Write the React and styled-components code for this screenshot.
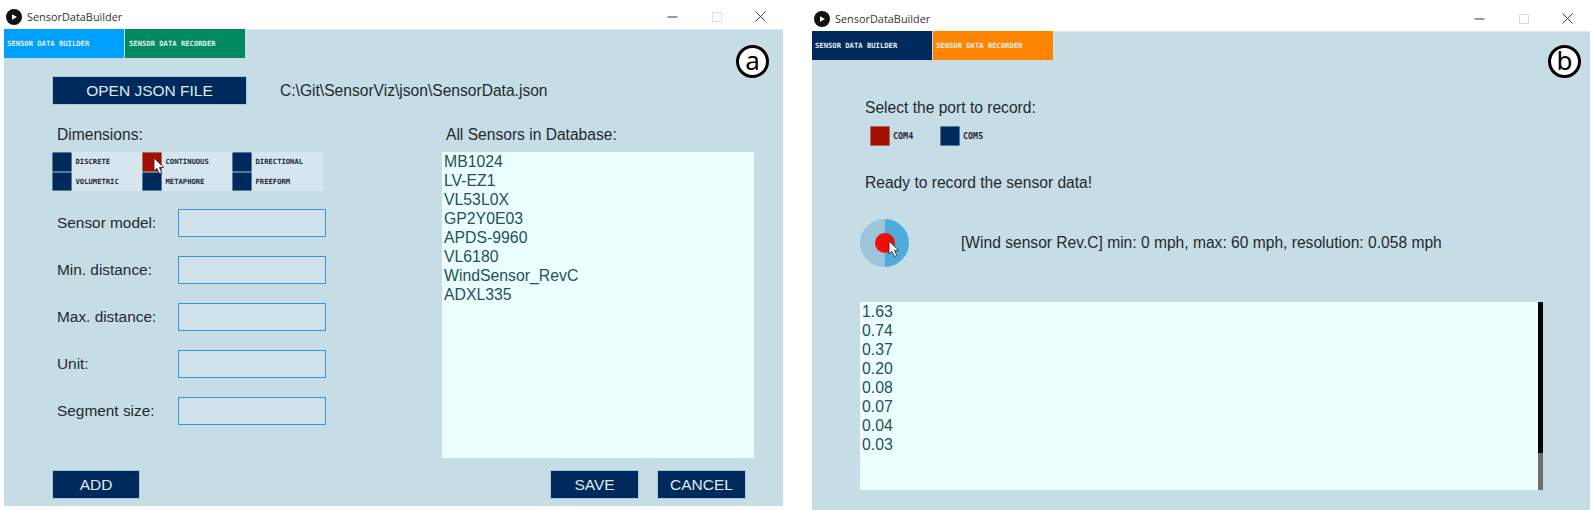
import styled, { createGlobalStyle } from 'styled-components';

const NAVY = '#012a5c';
const RED = '#a50f00';

const GlobalStyle = createGlobalStyle`
  html, body {
    margin: 0;
    padding: 0;
    background: #ffffff;
  }
  * {
    box-sizing: border-box;
  }
`;

const Page = styled.div`
  width: 1595px;
  height: 510px;
  overflow: hidden;
  display: flex;
  padding-left: 4px;
  gap: 29px;
  font-family: 'Liberation Sans', Arial, sans-serif;
  color: #222a2e;
`;

const Window = styled.div`
  width: ${({ $width }) => $width}px;
  display: flex;
  flex-direction: column;
`;

const TitleBar = styled.div`
  height: ${({ $height }) => $height}px;
  flex-shrink: 0;
  display: flex;
  align-items: center;
  background: #ffffff;
  padding-top: ${({ $dropTop }) => $dropTop}px;
`;

const AppIcon = styled.svg`
  width: 16px;
  height: 16px;
  margin-left: 2px;
`;

const AppTitle = styled.span`
  margin-left: 5px;
  font-family: 'Open Sans', 'Noto Sans', sans-serif;
  font-size: 10.9px;
  color: #333333;
`;

const Controls = styled.div`
  margin-left: auto;
  display: flex;
  align-items: center;
  width: 99px;
  justify-content: space-between;
  margin-right: 17px;
  height: 12px;
`;

const Body = styled.div`
  position: relative;
  height: ${({ $height }) => $height}px;
  background: #c7dde6;
  border-top: 1px solid #dbe8ee;
`;

const Tabs = styled.div`
  display: flex;
  gap: 1px;
  margin-top: -1px;
`;

const Tab = styled.div`
  width: 120px;
  height: 29px;
  display: flex;
  align-items: center;
  padding-left: ${({ $pad }) => $pad}px;
  background: ${({ $color }) => $color};
  color: #e0efee;
  font-family: 'DejaVu Sans Mono', monospace;
  font-size: 7.2px;
  font-weight: 700;
  white-space: nowrap;
`;

const Badge = styled.div`
  position: absolute;
  top: ${({ $top }) => $top}px;
  right: ${({ $right }) => $right}px;
  width: 33px;
  height: 33px;
  border-radius: 50%;
  border: 3px solid #000000;
  background: #ffffff;
  display: flex;
  align-items: center;
  justify-content: center;
  padding-bottom: 3px;
  color: #000000;
  font-family: 'Noto Sans', sans-serif;
  font-size: 26px;
  line-height: 1;
`;

const BuilderContent = styled.div`
  padding: 18px 24px 0 48px;
`;

const TopRow = styled.div`
  display: flex;
  align-items: center;
  gap: 33px;
`;

const NavyButton = styled.div`
  width: ${({ $width }) => $width}px;
  height: 29px;
  display: flex;
  align-items: center;
  justify-content: center;
  background: ${NAVY};
  box-shadow: 0 0 0 1px #a9c6d8 inset;
  color: #dfe9ef;
  font-size: 15.5px;
`;

const PathText = styled.span`
  font-size: 15.6px;
`;

const Columns = styled.div`
  display: flex;
  margin-top: 21px;
`;

const FormColumn = styled.div`
  width: 390px;
`;

const Heading = styled.div`
  font-size: 15.6px;
  line-height: 17px;
  padding-left: ${({ $indent }) => $indent}px;
`;

const DimensionGrid = styled.div`
  display: grid;
  grid-template-columns: 90px 90px 91px;
  width: 271px;
  margin-top: 9px;
  background: #d6e6ee;
`;

const DimensionItem = styled.div`
  height: 19.5px;
  display: flex;
  align-items: center;
  gap: 3.5px;
`;

const Check = styled.div`
  width: ${({ $size }) => $size || 20}px;
  height: ${({ $size }) => $size || 19.5}px;
  flex-shrink: 0;
  position: relative;
  background: ${({ $on }) => ($on ? RED : NAVY)};
  box-shadow: 0 0 0 0.5px #a9c6d8 inset;
`;

const PixelLabel = styled.span`
  font-family: 'DejaVu Sans Mono', monospace;
  font-size: ${({ $size }) => $size || 7.2}px;
  font-weight: 700;
  color: #1f2a33;
  white-space: nowrap;
`;

const Cursor = styled.svg`
  position: absolute;
  left: ${({ $left }) => $left}px;
  top: ${({ $top }) => $top}px;
  width: 13px;
  height: 18px;
  z-index: 2;
`;

const Fields = styled.div`
  margin-top: 18px;
  display: flex;
  flex-direction: column;
  gap: 19px;
`;

const FieldRow = styled.div`
  display: flex;
  align-items: center;
  padding-left: 5px;
`;

const FieldLabel = styled.span`
  width: 121px;
  font-size: 15.4px;
`;

const FieldInput = styled.div`
  width: 148px;
  height: 28px;
  background: #cfe2ea;
  border: 1.5px solid #3c92dc;
`;

const ListColumn = styled.div`
  display: flex;
  flex-direction: column;
`;

const DataBox = styled.div`
  position: relative;
  width: ${({ $width }) => $width}px;
  height: ${({ $height }) => $height}px;
  margin-top: ${({ $top }) => $top || 0}px;
  padding: 0 2px;
  background: #ecffff;
  color: #235257;
  font-size: 15.8px;
  line-height: 19px;
`;

const Footer = styled.div`
  display: flex;
  gap: 18px;
  margin: 12px 13px 0 0;
`;

const FooterSpacer = styled.div`
  flex: 1;
`;

const RecorderContent = styled.div`
  padding: 39px 0 0 48px;
`;

const PortRow = styled.div`
  display: flex;
  align-items: center;
  margin: 10px 0 0 10px;
`;

const Port = styled.div`
  width: 70px;
  display: flex;
  align-items: center;
  gap: 3px;
`;

const ReadyText = styled.div`
  font-size: 15.6px;
  line-height: 17px;
  margin-top: 28px;
  padding-left: 5px;
`;

const RecordRow = styled.div`
  display: flex;
  align-items: center;
  margin-top: 28px;
`;

const RecordButton = styled.div`
  position: relative;
  width: 49px;
  height: 48px;
  flex-shrink: 0;
  border-radius: 50%;
  background: linear-gradient(90deg, #9cc4da 50%, #4eacdd 50%);
  display: flex;
  align-items: center;
  justify-content: center;
`;

const RecordDot = styled.div`
  width: 20px;
  height: 20px;
  border-radius: 50%;
  background: #f20d00;
`;

const SensorInfo = styled.span`
  margin-left: 52px;
  font-size: 15.6px;
  white-space: nowrap;
`;

const LogArea = styled.div`
  display: flex;
  margin-top: 35px;
`;

const ScrollBar = styled.div`
  width: 5px;
  height: 188px;
  display: flex;
  flex-direction: column;
  background: #6e6e6e;
`;

const ScrollThumb = styled.div`
  height: 151px;
  background: #050505;
`;

const PlayIcon = () => (
  <AppIcon viewBox="0 0 16 16">
    <circle cx="8" cy="8" r="8" fill="#111111" />
    <path d="M6 5.2 L11 8 L6 10.8 Z" fill="#ffffff" />
  </AppIcon>
);

const WindowControls = () => (
  <Controls>
    <svg width="11" height="12" viewBox="0 0 11 12">
      <path d="M0.5 6 H10.5" stroke="#555555" strokeWidth="1.2" />
    </svg>
    <svg width="10" height="10" viewBox="0 0 10 10">
      <rect x="0.5" y="0.5" width="9" height="9" fill="none" stroke="#dddddd" />
    </svg>
    <svg width="11" height="11" viewBox="0 0 11 11">
      <path d="M0.5 0.5 L10.5 10.5 M10.5 0.5 L0.5 10.5" stroke="#444444" strokeWidth="1" />
    </svg>
  </Controls>
);

const Pointer = ({ left, top }) => (
  <Cursor $left={left} $top={top} viewBox="0 0 13 18">
    <path
      d="M1 1 L1 14 L4 11.4 L6.4 16.6 L8.8 15.5 L6.4 10.6 L10.6 10.4 Z"
      fill="#ffffff"
      stroke="#222222"
      strokeWidth="0.8"
    />
  </Cursor>
);

const dimensions = [
  { label: 'DISCRETE' },
  { label: 'CONTINUOUS', on: true },
  { label: 'DIRECTIONAL' },
  { label: 'VOLUMETRIC' },
  { label: 'METAPHORE' },
  { label: 'FREEFORM' },
];

const fields = ['Sensor model:', 'Min. distance:', 'Max. distance:', 'Unit:', 'Segment size:'];

const sensors = [
  'MB1024',
  'LV-EZ1',
  'VL53L0X',
  'GP2Y0E03',
  'APDS-9960',
  'VL6180',
  'WindSensor_RevC',
  'ADXL335',
];

const readings = ['1.63', '0.74', '0.37', '0.20', '0.08', '0.07', '0.04', '0.03'];

const BuilderWindow = () => (
  <Window $width={779}>
    <TitleBar $height={29} $dropTop={4}>
      <PlayIcon />
      <AppTitle>SensorDataBuilder</AppTitle>
      <WindowControls />
    </TitleBar>
    <Body $height={477}>
      <Tabs>
        <Tab $color="#00a0ff" $pad={3}>SENSOR DATA BUILDER</Tab>
        <Tab $color="#008a60" $pad={4}>SENSOR DATA RECORDER</Tab>
      </Tabs>
      <Badge $top={15} $right={14}>a</Badge>
      <BuilderContent>
        <TopRow>
          <NavyButton $width={195}>OPEN JSON FILE</NavyButton>
          <PathText>C:\Git\SensorViz\json\SensorData.json</PathText>
        </TopRow>
        <Columns>
          <FormColumn>
            <Heading $indent={5}>Dimensions:</Heading>
            <DimensionGrid>
              {dimensions.map((item) => (
                <DimensionItem key={item.label}>
                  <Check $on={item.on}>
                    {item.on && <Pointer left={11} top={5} />}
                  </Check>
                  <PixelLabel>{item.label}</PixelLabel>
                </DimensionItem>
              ))}
            </DimensionGrid>
            <Fields>
              {fields.map((name) => (
                <FieldRow key={name}>
                  <FieldLabel>{name}</FieldLabel>
                  <FieldInput />
                </FieldRow>
              ))}
            </Fields>
          </FormColumn>
          <ListColumn>
            <Heading $indent={4}>All Sensors in Database:</Heading>
            <DataBox $width={312} $height={306} $top={9}>
              {sensors.map((name) => (
                <div key={name}>{name}</div>
              ))}
            </DataBox>
          </ListColumn>
        </Columns>
        <Footer>
          <NavyButton $width={88}>ADD</NavyButton>
          <FooterSpacer />
          <NavyButton $width={89}>SAVE</NavyButton>
          <NavyButton $width={89}>CANCEL</NavyButton>
        </Footer>
      </BuilderContent>
    </Body>
  </Window>
);

const RecorderWindow = () => (
  <Window $width={778}>
    <TitleBar $height={31} $dropTop={6}>
      <PlayIcon />
      <AppTitle>SensorDataBuilder</AppTitle>
      <WindowControls />
    </TitleBar>
    <Body $height={479}>
      <Tabs>
        <Tab $color={NAVY} $pad={3}>SENSOR DATA BUILDER</Tab>
        <Tab $color="#ff8400" $pad={3}>SENSOR DATA RECORDER</Tab>
      </Tabs>
      <Badge $top={13} $right={9}>b</Badge>
      <RecorderContent>
        <Heading $indent={5}>Select the port to record:</Heading>
        <PortRow>
          <Port>
            <Check $on $size={20} />
            <PixelLabel $size={8.4}>COM4</PixelLabel>
          </Port>
          <Port>
            <Check $size={20} />
            <PixelLabel $size={8.4}>COM5</PixelLabel>
          </Port>
        </PortRow>
        <ReadyText>Ready to record the sensor data!</ReadyText>
        <RecordRow>
          <RecordButton>
            <RecordDot />
            <Pointer left={28} top={21} />
          </RecordButton>
          <SensorInfo>[Wind sensor Rev.C] min: 0 mph, max: 60 mph, resolution: 0.058 mph</SensorInfo>
        </RecordRow>
        <LogArea>
          <DataBox $width={678} $height={188}>
            {readings.map((value, i) => (
              <div key={i}>{value}</div>
            ))}
          </DataBox>
          <ScrollBar>
            <ScrollThumb />
          </ScrollBar>
        </LogArea>
      </RecorderContent>
    </Body>
  </Window>
);

const App = () => (
  <Page>
    <GlobalStyle />
    <BuilderWindow />
    <RecorderWindow />
  </Page>
);

export default App;
